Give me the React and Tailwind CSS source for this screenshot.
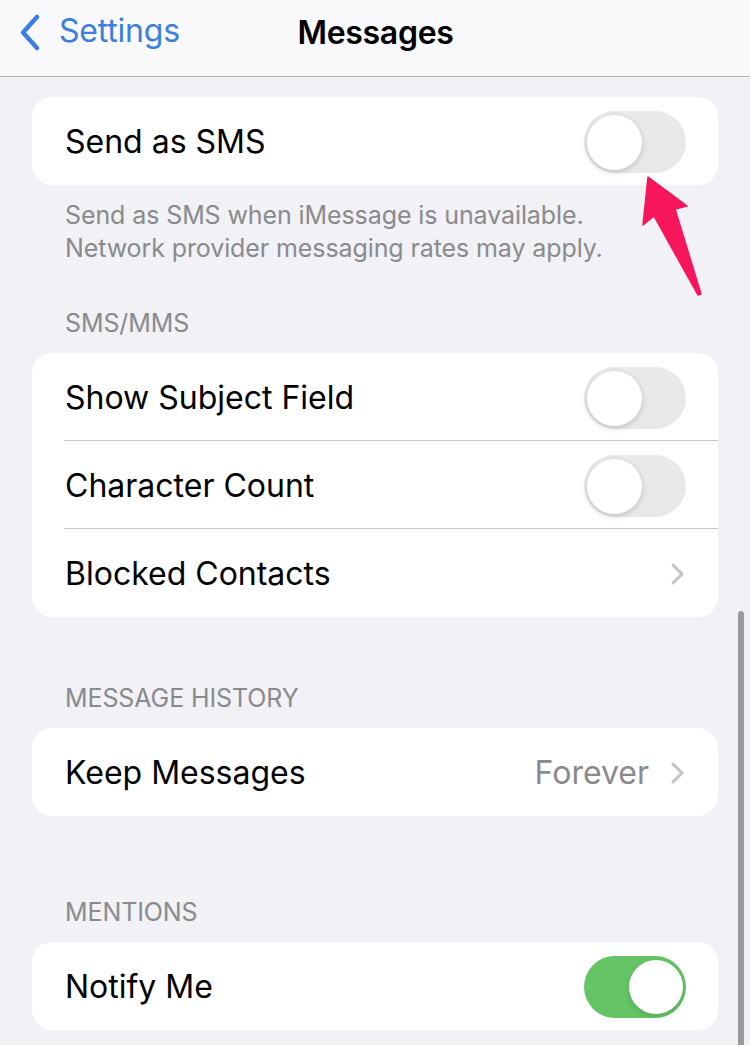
import React from "react";

const font = { fontFamily: "Inter, 'Liberation Sans', sans-serif" };

function Toggle({ on }) {
  return on ? (
    <div className="w-[102px] h-[62px] rounded-full bg-[#65c466] relative shrink-0">
      <div className="absolute right-[3px] top-[4px] w-[54px] h-[54px] rounded-full bg-white shadow-[0_2px_6px_rgba(0,0,0,0.15)]" />
    </div>
  ) : (
    <div className="w-[102px] h-[62px] rounded-full bg-[#e9e9eb] relative shrink-0">
      <div className="absolute left-[3px] top-[4px] w-[55px] h-[55px] rounded-full bg-white shadow-[0_2px_6px_rgba(0,0,0,0.18)]" />
    </div>
  );
}

function Chevron() {
  return (
    <svg width="16" height="24" viewBox="0 0 16 24" className="shrink-0">
      <path d="M3 3 L12 12 L3 21" fill="none" stroke="#c4c4c7" strokeWidth="3" strokeLinecap="round" strokeLinejoin="round" />
    </svg>
  );
}

function Row({ label, right, last }) {
  return (
    <div className="h-[88px] flex items-center pl-[33px] relative">
      <div className="flex-1 flex items-center pr-[32px] h-full pt-[1px]">
        <span className="text-[32px] text-black">{label}</span>
        <div className="ml-auto flex items-center">{right}</div>
      </div>
      {!last && <div className="absolute left-[32px] right-0 bottom-0 h-px bg-[#c8c8cc]" />}
    </div>
  );
}

function SectionHeader({ children, mt }) {
  return (
    <div className={`px-[65px] text-[25px] leading-[30px] text-[#8a8a8e] uppercase tracking-[-0.1px] ${mt} mb-[15px]`}>
      {children}
    </div>
  );
}

export default function App() {
  return (
    <div className="w-[750px] h-[1045px] bg-[#f1f1f6] relative overflow-hidden" style={font}>
      {/* Header */}
      <div className="h-[77px] bg-[#f9f9fb] border-b border-[#b4b4b8] relative flex items-center pb-[11px]">
        <div className="absolute left-[18px] top-[10px] flex items-center">
          <svg width="24" height="40" viewBox="0 0 24 40">
            <path d="M19 4 L5 19.5 L19 35" fill="none" stroke="#3a7ee0" strokeWidth="4.5" strokeLinecap="round" strokeLinejoin="round" />
          </svg>
          <span className="ml-[17px] text-[32px] text-[#3a7ee0] tracking-[-0.2px] -mt-[3px]">Settings</span>
        </div>
        <div className="w-full text-center text-[32px] font-semibold text-black tracking-[-0.3px] pl-[1px]">Messages</div>
      </div>

      <div className="px-[32px] pt-[20px]">
        <div className="bg-white rounded-[20px] overflow-hidden">
          <Row label="Send as SMS" right={<Toggle />} last />
        </div>
      </div>
      <div className="px-[65px] pt-[14px] text-[25px] leading-[33px] text-[#8a8a8e] tracking-[-0.1px]">
        <div>Send as SMS when iMessage is unavailable.</div>
        <div>Network provider messaging rates may apply.</div>
      </div>

      <SectionHeader mt="mt-[43px]">SMS/MMS</SectionHeader>
      <div className="px-[32px]">
        <div className="bg-white rounded-[20px] overflow-hidden">
          <Row label="Show Subject Field" right={<Toggle />} />
          <Row label="Character Count" right={<Toggle />} />
          <Row label="Blocked Contacts" right={<Chevron />} last />
        </div>
      </div>

      <SectionHeader mt="mt-[66px]">Message History</SectionHeader>
      <div className="px-[32px]">
        <div className="bg-white rounded-[20px] overflow-hidden">
          <Row
            label="Keep Messages"
            right={
              <div className="flex items-center gap-[21px]">
                <span className="text-[32px] text-[#8a8a8e]">Forever</span>
                <Chevron />
              </div>
            }
            last
          />
        </div>
      </div>

      <SectionHeader mt="mt-[81px]">Mentions</SectionHeader>
      <div className="px-[32px]">
        <div className="bg-white rounded-[20px] overflow-hidden">
          <Row label="Notify Me" right={<Toggle on />} last />
        </div>
      </div>

      {/* Scrollbar */}
      <div className="absolute left-[738px] top-[611px] w-[6px] h-[440px] rounded-full bg-[#9a9a9c]" />

      {/* Arrow annotation */}
      <svg className="absolute left-[630px] top-[165px]" width="90" height="140" viewBox="0 0 90 140">
        <path d="M18 12 L57 41 L45 44 L71 129 L68 130 L24 51 L13 60 Z" fill="#f7155c" stroke="#f7155c" strokeWidth="1.5" strokeLinejoin="round" />
      </svg>
    </div>
  );
}
